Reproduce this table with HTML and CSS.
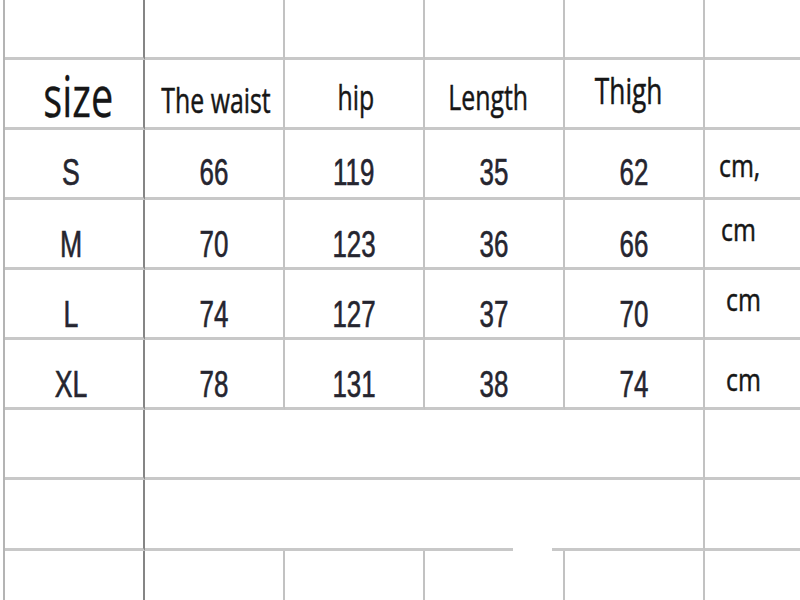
FILE: index.html
```html
<!DOCTYPE html>
<html>
<head>
<meta charset="utf-8">
<link rel="stylesheet" href="styles.css">
</head>
<body>
<div class="chart">
  <div class="cell c0"></div><div class="cell"></div><div class="cell"></div><div class="cell"></div><div class="cell"></div><div class="cell last"></div>

  <div class="cell c0 h-size"><span class="hd big">size</span></div>
  <div class="cell h-waist"><span class="hd">The waist</span></div>
  <div class="cell h-hip"><span class="hd">hip</span></div>
  <div class="cell h-len"><span class="hd">Length</span></div>
  <div class="cell h-thigh"><span class="hd thigh">Thigh</span></div>
  <div class="cell last"></div>

  <div class="cell c0 d r-s"><span class="num lbl">S</span></div>
  <div class="cell d r-s"><span class="num">66</span></div>
  <div class="cell d r-s"><span class="num">119</span></div>
  <div class="cell d r-s"><span class="num">35</span></div>
  <div class="cell d r-s"><span class="num">62</span></div>
  <div class="cell last u u-s"><span class="unit">cm,</span></div>

  <div class="cell c0 d"><span class="num lbl">M</span></div>
  <div class="cell d"><span class="num">70</span></div>
  <div class="cell d"><span class="num">123</span></div>
  <div class="cell d"><span class="num">36</span></div>
  <div class="cell d"><span class="num">66</span></div>
  <div class="cell last u u-m"><span class="unit">cm</span></div>

  <div class="cell c0 d"><span class="num lbl">L</span></div>
  <div class="cell d"><span class="num">74</span></div>
  <div class="cell d"><span class="num">127</span></div>
  <div class="cell d"><span class="num">37</span></div>
  <div class="cell d"><span class="num">70</span></div>
  <div class="cell last u u-l"><span class="unit">cm</span></div>

  <div class="cell c0 d"><span class="num lbl">XL</span></div>
  <div class="cell d"><span class="num">78</span></div>
  <div class="cell d"><span class="num">131</span></div>
  <div class="cell d"><span class="num">38</span></div>
  <div class="cell d"><span class="num">74</span></div>
  <div class="cell last u u-xl"><span class="unit">cm</span></div>

  <div class="cell c0"></div>
  <div class="cell merged"></div>
  <div class="cell last"></div>

  <div class="cell c0"></div>
  <div class="cell merged gap"><span class="gapmask"></span></div>
  <div class="cell last"></div>

  <div class="cell c0"></div><div class="cell"></div><div class="cell"></div><div class="cell"></div><div class="cell"></div><div class="cell last"></div>
</div>
</body>
</html>
```

FILE: styles.css
```css
html, body {
  margin: 0;
  padding: 0;
  background: #ffffff;
  overflow: hidden;
  width: 800px;
  height: 600px;
}

.chart {
  margin-left: 3px;
  border-left: 2px solid #b4b4b4;
  display: grid;
  grid-template-columns: 140px 140px 140px 140px 140px 95px;
  grid-template-rows: 60px 70px 70px 70px 70px 70px 70px 71px 60px;
  color: #1c1c1c;
}

.cell {
  box-sizing: border-box;
  border-right: 2px solid #c2c2c2;
  border-bottom: 3px solid #c8c8c8;
  display: flex;
  justify-content: center;
  align-items: flex-start;
  position: relative;
}

.cell.c0 { border-right-color: #858585; }
.cell.last { border-right: none; }
.cell.merged { grid-column: 2 / 6; }

.gapmask {
  position: absolute;
  left: 368px;
  bottom: -3px;
  width: 39px;
  height: 3px;
  background: #ffffff;
}

.hd {
  display: inline-block;
  font-family: "Open Sans", "Noto Sans", sans-serif;
  font-size: 35px;
  line-height: 1;
  transform: scaleX(0.71);
  white-space: nowrap;
  color: #161616;
  -webkit-text-stroke: 0.5px #161616;
}
.hd.big { font-size: 56px; -webkit-text-stroke: 0.3px #161616; }
.hd.thigh { font-size: 37px; }

.h-size { padding-top: 7px; padding-left: 9px; }
.h-waist { padding-top: 22px; padding-left: 4px; }
.h-hip { padding-top: 19px; padding-left: 3px; }
.h-len { padding-top: 19px; padding-right: 12px; }
.h-thigh { padding-top: 11px; padding-right: 11px; }

.num {
  display: inline-block;
  font-family: "Liberation Sans", Arial, sans-serif;
  font-size: 36px;
  line-height: 1;
  transform: scaleX(0.72);
  white-space: nowrap;
  color: #25252f;
  -webkit-text-stroke: 0.6px #25252f;
}
.num.lbl { transform: scaleX(0.74); }

.d { padding-top: 27px; }
.d.r-s { padding-top: 25px; }
.c0.d { padding-right: 6px; }

.u { justify-content: flex-start; }
.unit {
  display: inline-block;
  font-family: "Open Sans", "Noto Sans", sans-serif;
  font-size: 31px;
  line-height: 1;
  transform: scaleX(0.8);
  transform-origin: left center;
  white-space: nowrap;
  color: #161616;
  -webkit-text-stroke: 0.5px #161616;
}
.u-s { padding-top: 20px; padding-left: 14px; }
.u-m { padding-top: 14px; padding-left: 16px; }
.u-l { padding-top: 14px; padding-left: 21px; }
.u-xl { padding-top: 24px; padding-left: 21px; }
```
